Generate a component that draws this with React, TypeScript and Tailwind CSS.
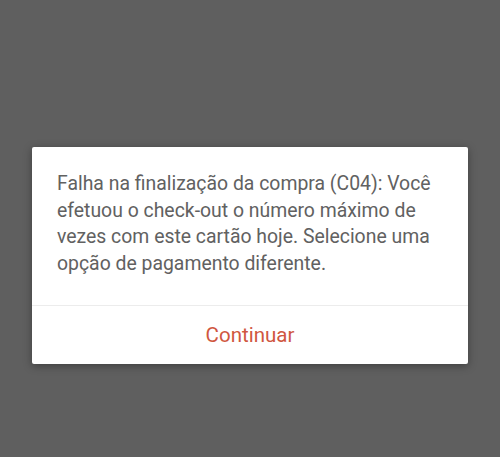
export default function App() {
  return (
    <div className="w-[500px] h-[457px] bg-[#5f5f5f] flex items-start justify-center pt-[147px]" style={{ fontFamily: "Roboto, 'Noto Sans', sans-serif" }}>
      <div className="w-[436px] bg-white rounded-[2px] shadow-[0_2px_8px_rgba(0,0,0,0.35)]">
        <p className="pl-[25px] pr-[30px] pt-[24px] pb-[28px] text-[19.4px] leading-[26.5px] text-[#616161]">
          Falha na finalização da compra (C04): Você efetuou o check-out o número máximo de vezes com este cartão hoje. Selecione uma opção de pagamento diferente.
        </p>
        <div className="border-t border-[#ececec] h-[59px] flex items-center justify-center">
          <button className="text-[20.5px] text-[#d0573f]">Continuar</button>
        </div>
      </div>
    </div>
  );
}
